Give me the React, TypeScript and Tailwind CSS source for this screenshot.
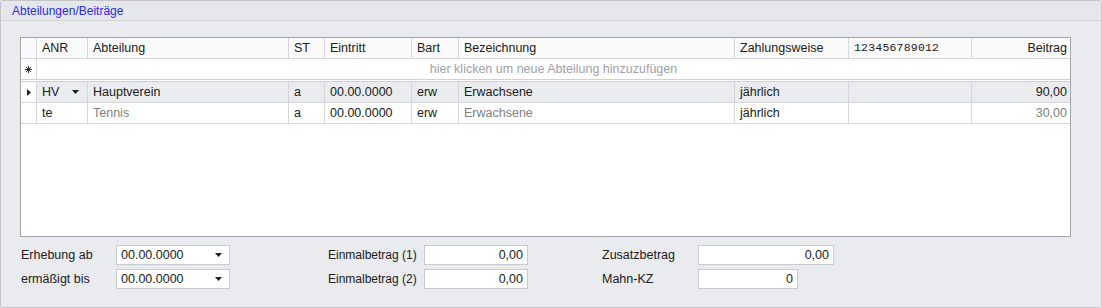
import React from 'react';

const font = { fontFamily: '"Liberation Sans", Arial, sans-serif' };

const cols = 'grid grid-cols-[16px_51px_201px_36px_87px_47px_276px_114px_123px_99px]';

// Zeilen der Tabelle
const rows = [
  { anr: 'HV', abt: 'Hauptverein', st: 'a', eintritt: '00.00.0000', bart: 'erw', bez: 'Erwachsene', zw: 'jährlich', betrag: '90,00', current: true },
  { anr: 'te', abt: 'Tennis', st: 'a', eintritt: '00.00.0000', bart: 'erw', bez: 'Erwachsene', zw: 'jährlich', betrag: '30,00', current: false },
];

function DownArrow() {
  return (
    <svg width="8" height="5" viewBox="0 0 8 5" className="shrink-0">
      <path d="M0 0h7L3.5 4z" fill="#202020" />
    </svg>
  );
}

function Cell({ children, className = '' }: { children?: React.ReactNode; className?: string }) {
  return <div className={`border-r border-[#d6d6db] px-[5px] flex items-center overflow-hidden whitespace-nowrap ${className}`}>{children}</div>;
}

function DateBox() {
  return (
    <div className="w-[114px] h-[20px] bg-white border border-[#c9cacf] flex items-center justify-between pl-[4px] pr-[6px] text-[#202020]">
      <span>00.00.0000</span>
      <DownArrow />
    </div>
  );
}

function NumBox({ value, w }: { value: string; w: string }) {
  return (
    <div className={`${w} h-[20px] bg-white border border-[#c9cacf] flex items-center justify-end pr-[4px] text-[#202020]`}>
      {value}
    </div>
  );
}

export default function App() {
  return (
    <div className="w-[1102px] h-[308px] bg-[#eaebef] text-[12.5px]" style={font}>
      <div className="h-full border border-[#c4c5ca] rounded-[3px] flex flex-col">
        {/* Titelleiste */}
        <div className="h-[20px] border-b border-[#d4d5da] bg-[#e6e7eb] flex items-center pl-[11px] text-[12px] text-[#2a2af5]">
          Abteilungen/Beiträge
        </div>

        <div className="pl-[19px] pt-[16px]">
          {/* Tabelle */}
          <div className="w-[1051px] h-[200px] bg-white border border-[#a3a3ab] text-[#202020]">
            <div className={`${cols} h-[21px] border-b border-[#d6d6db] bg-[#fafafa]`}>
              <Cell />
              <Cell>ANR</Cell>
              <Cell>Abteilung</Cell>
              <Cell>ST</Cell>
              <Cell>Eintritt</Cell>
              <Cell>Bart</Cell>
              <Cell>Bezeichnung</Cell>
              <Cell>Zahlungsweise</Cell>
              <Cell className="text-[11.5px] tracking-[0.2px]">
                <span style={{ fontFamily: '"Liberation Mono", "Courier New", monospace' }}>123456789012</span>
              </Cell>
              <Cell className="justify-end border-r-0 pr-[4px]">Beitrag</Cell>
            </div>

            {/* neue Zeile */}
            <div className="flex h-[23px] border-b-[3px] border-double border-[#d0d0d5]">
              <div className="w-[16px] border-r border-[#d6d6db] flex items-center justify-center">
                <svg width="7" height="7" viewBox="0 0 7 7">
                  <path d="M3.5 0v7M0 3.5h7M1 1l5 5M6 1L1 6" stroke="#303030" strokeWidth="1" />
                </svg>
              </div>
              <div className="flex-1 flex items-center justify-center text-[#a0a0a8]">
                hier klicken um neue Abteilung hinzuzufügen
              </div>
            </div>

            {rows.map((r) => (
              <div key={r.anr} className={`${cols} h-[21px] border-b border-[#d6d6db] ${r.current ? 'bg-[#ebecef]' : 'bg-white'}`}>
                <Cell className="justify-center px-0 bg-white">
                  {r.current && (
                    <svg width="4" height="7" viewBox="0 0 4 7">
                      <path d="M0 0l4 3.5L0 7z" fill="#202020" />
                    </svg>
                  )}
                </Cell>
                <Cell className="justify-between pr-[7px]">
                  <span>{r.anr}</span>
                  {r.current && <DownArrow />}
                </Cell>
                <Cell className={r.current ? '' : 'text-[#808080]'}>{r.abt}</Cell>
                <Cell>{r.st}</Cell>
                <Cell>{r.eintritt}</Cell>
                <Cell>{r.bart}</Cell>
                <Cell className={r.current ? '' : 'text-[#808080]'}>{r.bez}</Cell>
                <Cell>{r.zw}</Cell>
                <Cell />
                <Cell className={`justify-end border-r-0 pr-[4px] ${r.current ? '' : 'text-[#808080]'}`}>{r.betrag}</Cell>
              </div>
            ))}
          </div>

          {/* Formular unten */}
          <div className="flex mt-[8px] text-[#202020]">
            <div className="flex flex-col gap-[4px] w-[308px]">
              <div className="flex items-center">
                <span className="w-[96px] pl-[1px]">Erhebung ab</span>
                <DateBox />
              </div>
              <div className="flex items-center">
                <span className="w-[96px] pl-[1px]">ermäßigt bis</span>
                <DateBox />
              </div>
            </div>
            <div className="flex flex-col gap-[4px] w-[274px]">
              <div className="flex items-center">
                <span className="w-[96px] text-[12px] whitespace-nowrap">Einmalbetrag (1)</span>
                <NumBox value="0,00" w="w-[104px]" />
              </div>
              <div className="flex items-center">
                <span className="w-[96px] text-[12px] whitespace-nowrap">Einmalbetrag (2)</span>
                <NumBox value="0,00" w="w-[104px]" />
              </div>
            </div>
            <div className="flex flex-col gap-[4px]">
              <div className="flex items-center">
                <span className="w-[96px]">Zusatzbetrag</span>
                <NumBox value="0,00" w="w-[136px]" />
              </div>
              <div className="flex items-center">
                <span className="w-[96px]">Mahn-KZ</span>
                <NumBox value="0" w="w-[100px]" />
              </div>
            </div>
          </div>
        </div>
      </div>
    </div>
  );
}
